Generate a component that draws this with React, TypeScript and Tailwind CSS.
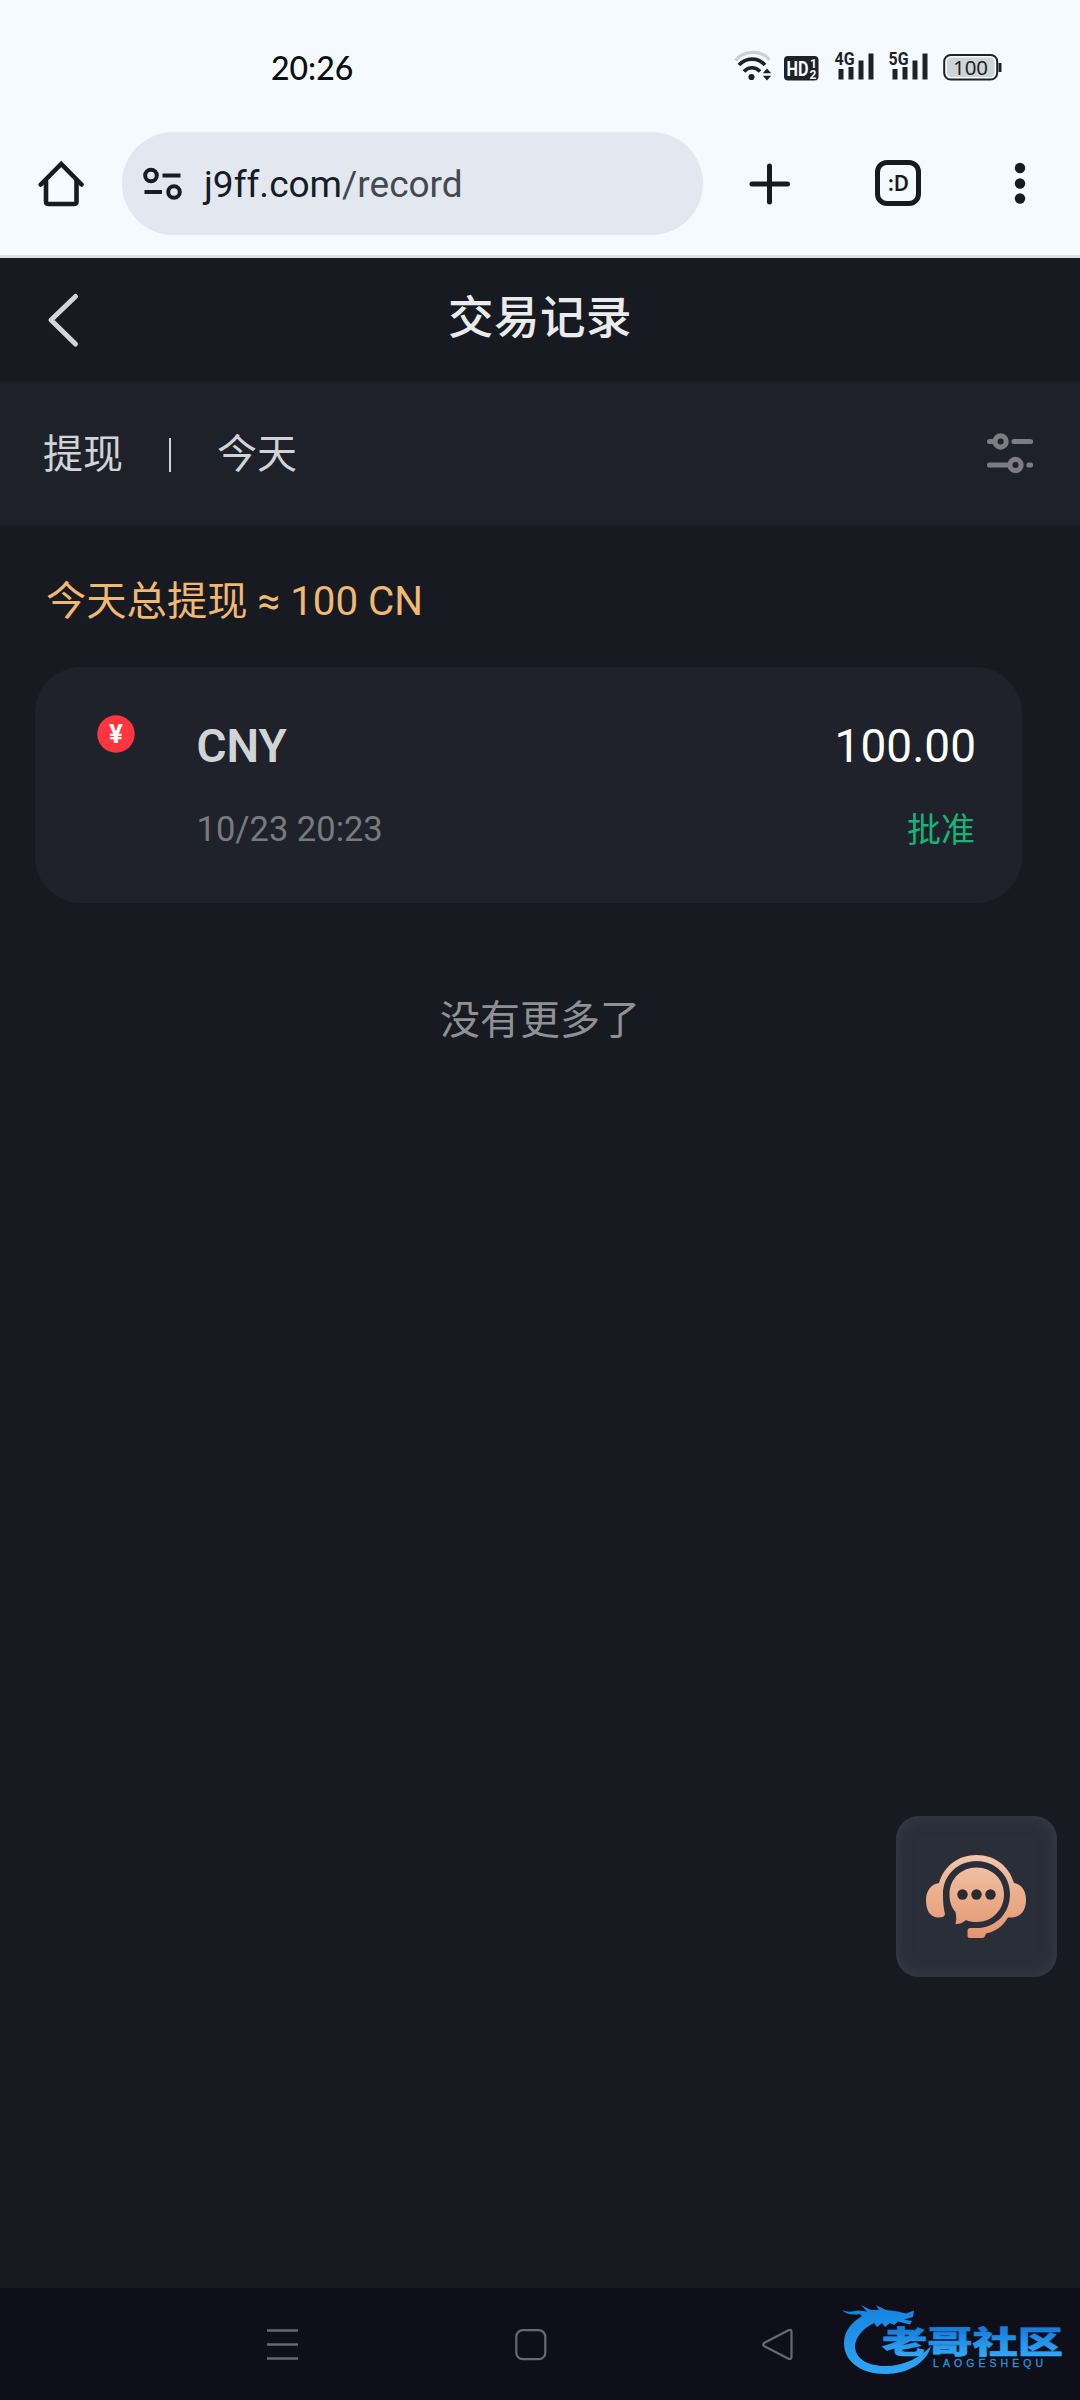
const records = [
  { id: 1, currency: "CNY", time: "10/23 20:23", amount: "100.00", status: "批准" },
];

function StatusBar() {
  return (
    <div className="flex h-[124px] items-start justify-between pl-[271px] pr-[78px] pt-[46px]">
      <span className="font-[Lato,sans-serif] text-[32px] font-medium leading-[43px] text-[#0b0d0f]">20:26</span>
      <svg width="268" height="40" viewBox="0 0 268 40" fill="#1d2226">
        {/* wifi */}
        <g fill="none" strokeWidth="3.6">
          <path d="M1.5 14.5C10 3.800 28 3.800 35.500 14" stroke="#cdd1d4" strokeWidth="3.200" />
          <path d="M5 19C12 11.100 24 11.100 31 19" stroke="#1d2226" />
          <path d="M10 25.500C14.500 20.500 21.500 20.500 26 25.500" stroke="#1d2226" />
        </g>
        <circle cx="17.500" cy="31" r="3.100" />
        <path d="M33 22.500l4.200 4.800h-8.400zM33 34.500l4.200-4.800h-8.400z" />
        {/* HD */}
        <rect x="50" y="10" width="34.500" height="24.500" rx="4" />
        <g fill="#f5faff" fontFamily="Roboto, sans-serif" fontWeight="700">
          <text x="52.500" y="29.500" fontSize="20" textLength="22" lengthAdjust="spacingAndGlyphs">HD</text>
          <text x="76" y="22" fontSize="12">1</text>
          <text x="75.500" y="32.500" fontSize="12">2</text>
        </g>
        {/* signal */}
        <g fontFamily="Roboto, sans-serif" fontWeight="700" fontSize="18">
          <text x="100.500" y="19" textLength="20" lengthAdjust="spacingAndGlyphs">4G</text>
          <text x="154.500" y="19" textLength="20" lengthAdjust="spacingAndGlyphs">5G</text>
        </g>
        <path d="M104.500 23h5v10.500h-5zM114.500 21h5v12.500h-5zM124.500 14.500h5v19h-5zM134.500 7.500h5v26h-5z" />
        <path d="M158.500 23h5v10.500h-5zM168.500 21h5v12.500h-5zM178.500 14.500h5v19h-5zM188.500 7.500h5v26h-5z" />
        {/* battery */}
        <rect x="210.200" y="9" width="53" height="24.500" rx="6.500" fill="#f5faff" stroke="#1d2226" strokeWidth="2" />
        <rect x="213" y="11.500" width="47.500" height="19.500" rx="4.500" fill="#cfd4d7" />
        <rect x="264.500" y="17" width="3" height="9" />
        <text x="219" y="29" fontFamily="'Noto Sans', sans-serif" fontSize="20.500" textLength="35">100</text>
      </svg>
    </div>
  );
}

function BrowserBar() {
  return (
    <div className="flex h-[134px] items-start border-b-[3px] border-[#dcdfe8] pl-[38px] pt-2">
      <svg className="mt-7 shrink-0" width="46" height="48" viewBox="0 0 46 48" fill="none" stroke="#171b1f" strokeWidth="4.600" strokeLinecap="round" strokeLinejoin="round">
        <path d="M2.800 24.500L23.200 4L43.500 24.500" strokeLinejoin="miter" />
        <path d="M8 21V41.500Q8 44 10.500 44H36Q38.500 44 38.500 41.500V21" />
      </svg>
      <div className="ml-[38px] flex h-[103px] w-[581px] shrink-0 items-center rounded-full bg-[#e2e7f0] pl-[21px]">
        <svg width="39" height="34" viewBox="0 0 39 34" fill="none" stroke="#171b22" strokeWidth="4">
          <circle cx="8" cy="8.500" r="5.800" />
          <path d="M19.500 8.500H37.500M1.500 25H19" />
          <circle cx="31" cy="25" r="5.800" />
        </svg>
        <span className="ml-[22px] pt-0.5 font-[Roboto,sans-serif] text-[37px] leading-[48px] text-[#171b22]">
          j9ff.com<span className="text-[#444950]">/record</span>
        </span>
      </div>
      <svg className="ml-[45.500px] mt-[30.500px] shrink-0" width="42" height="42" viewBox="0 0 42 42" stroke="#171b1f" strokeWidth="5" strokeLinecap="round">
        <path d="M20.500 3V39M3 21H38.500" />
      </svg>
      <div className="ml-[84px] mt-7 flex h-[46px] w-[46px] shrink-0 items-center justify-center rounded-xl border-[5px] border-[#171b1f]">
        <svg className="shrink-0" width="36" height="36" viewBox="0 0 36 36" fill="#171b1f">
          <text x="8" y="26" fontFamily="'Noto Sans', sans-serif" fontSize="22" fontWeight="600" textLength="21" lengthAdjust="spacingAndGlyphs">:D</text>
        </svg>
      </div>
      <svg className="ml-[93px] mt-[30px] shrink-0" width="12" height="42" viewBox="0 0 12 42" fill="#171b1f">
        <circle cx="6" cy="6" r="5.200" />
        <circle cx="6" cy="21.500" r="5.200" />
        <circle cx="6" cy="36.500" r="5.200" />
      </svg>
    </div>
  );
}

function Header() {
  return (
    <header className="flex h-[124px] items-start justify-between px-[46px]">
      <svg className="mt-[34px]" width="36" height="56" viewBox="0 0 36 56" fill="none" stroke="#d4d5d8" strokeWidth="5" strokeLinecap="round" strokeLinejoin="round">
        <path d="M29.500 4.500L5 28L29.500 52" />
      </svg>
      <h1 className="mt-[29px] text-[45.500px] font-medium leading-[64px] tracking-[0.5px] text-[#ebebed]">交易记录</h1>
      <div className="w-9" />
    </header>
  );
}

function FilterBar() {
  return (
    <div className="flex h-36 items-center bg-[#1e2129] pl-[43px] pr-[47px] pt-0.5 text-[40px] leading-[56px] text-[#d2d3d5]">
      <span>提现</span>
      <div className="ml-[46px] h-[34px] w-0.5 bg-[#d2d3d5]" />
      <span className="ml-[46px]">今天</span>
      <svg className="-mt-1 ml-auto" width="48" height="44" viewBox="0 0 48 44" fill="none" stroke="#7b7c84" strokeWidth="5.200" strokeLinecap="round">
        <path d="M4.600 10.500H8M29 10.500H45.500M4.600 34H22M44 34H45.500" />
        <circle cx="15.600" cy="10.500" r="5.600" />
        <circle cx="30.500" cy="34" r="5.600" />
      </svg>
    </div>
  );
}

function RecordCard({ record }: { record: (typeof records)[number] }) {
  return (
    <div className="ml-[35px] flex h-[236px] w-[987px] rounded-[46px] bg-[#1f222a] pl-[61.500px] pr-[46px]">
      <svg className="mt-12 shrink-0" width="38" height="38" viewBox="0 0 38 38">
        <circle cx="19" cy="19" r="18.700" fill="#fd3640" />
        <text x="19" y="28" textAnchor="middle" fontFamily="Roboto, sans-serif" fontSize="26" fontWeight="700" fill="#fff">¥</text>
      </svg>
      <div className="ml-[62px] flex-1 pt-[51px]">
        <p className="text-[46px] font-semibold leading-[56px] text-[#d2d3d5]">{record.currency}</p>
        <p className="mt-[31px] text-[34.500px] leading-[48px] text-[#797a7d]">{record.time}</p>
      </div>
      <div className="pt-[51px] text-right">
        <p className="text-[46px] leading-[56px] text-white">{record.amount}</p>
        <p className="mr-px mt-8 text-[34px] leading-[48px] text-[#19b377]">{record.status}</p>
      </div>
    </div>
  );
}

function SupportButton() {
  return (
    <button className="absolute left-[896px] top-[1816px] flex h-[161px] w-[161px] items-center justify-center rounded-[23px] bg-[#292e39] pb-0.5 pr-0.5 shadow-[inset_0_0_16px_#3a3f49]">
      <svg width="104" height="88" viewBox="0 0 104 88">
        <defs>
          <linearGradient id="peach" x1="0" y1="0" x2="0" y2="88" gradientUnits="userSpaceOnUse">
            <stop offset="0" stopColor="#f3c8ad" />
            <stop offset="1" stopColor="#e3946c" />
          </linearGradient>
        </defs>
        <g fill="url(#peach)">
          <path d="M15 31C20 14 34 3 52.500 3S85 14 90 31C98 32 102 39 102 48S98 65 88 65.500H84C79 74 71 80 62 81.500L61 84Q60.500 86 58 86H46Q43.500 86 43.500 83.500V79Q43.500 76 46.500 76H56C73 74 86 61 86 42C86 23 71 9 52.500 9S19 23 19 42C19 50 19.500 55 21 62Q21 65.500 14 65.500C5 65 2 57 2 48S7 32 15 31Z" />
          <path d="M52.500 15.500C68 15.500 80 27 80 42.500S68 70 53 70Q46 70 42 68Q37 72.500 31.500 72Q33 67 31.500 60C27 55 25.500 49 25.500 42.500C25.500 27 37 15.500 52.500 15.500Z" />
        </g>
        <g fill="#2c2a31">
          <circle cx="38.500" cy="42.500" r="5.200" />
          <circle cx="52.500" cy="42.500" r="5.200" />
          <circle cx="66.500" cy="42.500" r="5.200" />
        </g>
      </svg>
    </button>
  );
}

function CommunityLogo() {
  return (
    <svg className="absolute left-[840px] top-[2296px]" width="228" height="80" viewBox="0 0 228 80">
      <defs>
        <linearGradient id="dragon" x1="0" y1="0" x2="0" y2="1">
          <stop offset="0" stopColor="#1583e0" />
          <stop offset="1" stopColor="#2fa5f7" />
        </linearGradient>
        <linearGradient id="logoText" x1="0" y1="0" x2="0" y2="1">
          <stop offset="0.200" stopColor="#1279d8" />
          <stop offset="1" stopColor="#3ab0fb" />
        </linearGradient>
      </defs>
      {/* body, tail and head */}
      <path
        fill="url(#dragon)"
        d="M2 14Q8 17 18 14.500L27 15.500L21 9L31 14L39 14L36 9L46 14L58 15.500L66 17.500L74 14.500L73 21L64 23.500L72 25L70 28.500L58 25.500L54 29L50 27L45 31L42 27L37 31L34 27C22 33 15 42 15 51C16 64 30 70 45 70C64 70 80 62 91 50C87 67 67 78 46 78C20 78 4 65 4 47C4 35 12 26 22 20L20 18Q8 20 2 14Z"
      />
      <text x="42" y="57" fontFamily="'Noto Sans CJK SC', sans-serif" fontSize="31" fontWeight="900" textLength="181" lengthAdjust="spacingAndGlyphs" fill="url(#logoText)" stroke="url(#logoText)" strokeWidth="0.600">老哥社区</text>
      <text x="93" y="71" fontFamily="'Liberation Sans', sans-serif" fontSize="10.500" textLength="110" fill="#2a93dc" stroke="#2a93dc" strokeWidth="0.300">LAOGESHEQU</text>
    </svg>
  );
}

function NavBar() {
  return (
    <nav className="flex h-28 items-start bg-[#0f0f1a] pl-[266px] pt-10">
      <svg width="33" height="34" viewBox="0 0 33 34" stroke="#686873" strokeWidth="2.600">
        <path d="M1 2.500H32M1 16.500H32M1 30.500H32" />
      </svg>
      <svg className="ml-[215px]" width="34" height="34" viewBox="0 0 34 34" fill="none" stroke="#686873" strokeWidth="2.200">
        <rect x="2.300" y="2.200" width="29" height="29" rx="6.500" />
      </svg>
      <svg className="ml-[213px]" width="34" height="34" viewBox="0 0 34 34" fill="none" stroke="#686873" strokeWidth="2.200" strokeLinejoin="round">
        <path d="M3 15Q1.500 16.500 3 18L27 30.500Q30.500 32 30.500 29V4Q30.500 1 27.500 2.300Z" />
      </svg>
    </nav>
  );
}

export default function App() {
  return (
    <div className="relative flex h-[2400px] w-[1080px] flex-col overflow-hidden bg-[#181a22] font-[Roboto,'Noto_Sans_CJK_SC',sans-serif]">
      <div className="bg-[#f5faff]">
        <StatusBar />
        <BrowserBar />
      </div>
      <Header />
      <FilterBar />
      <main className="flex-1">
        <p className="ml-[46px] mt-12 text-[40.300px] leading-[56px] text-[#f0b873]">今天总提现 ≈ 100 CN</p>
        <div className="mt-[37px]">
          {records.map((record) => (
            <RecordCard key={record.id} record={record} />
          ))}
        </div>
        <p className="mt-[90px] text-center text-[40px] leading-[56px] text-[#8f9093]">没有更多了</p>
      </main>
      <NavBar />
      <SupportButton />
      <CommunityLogo />
    </div>
  );
}
